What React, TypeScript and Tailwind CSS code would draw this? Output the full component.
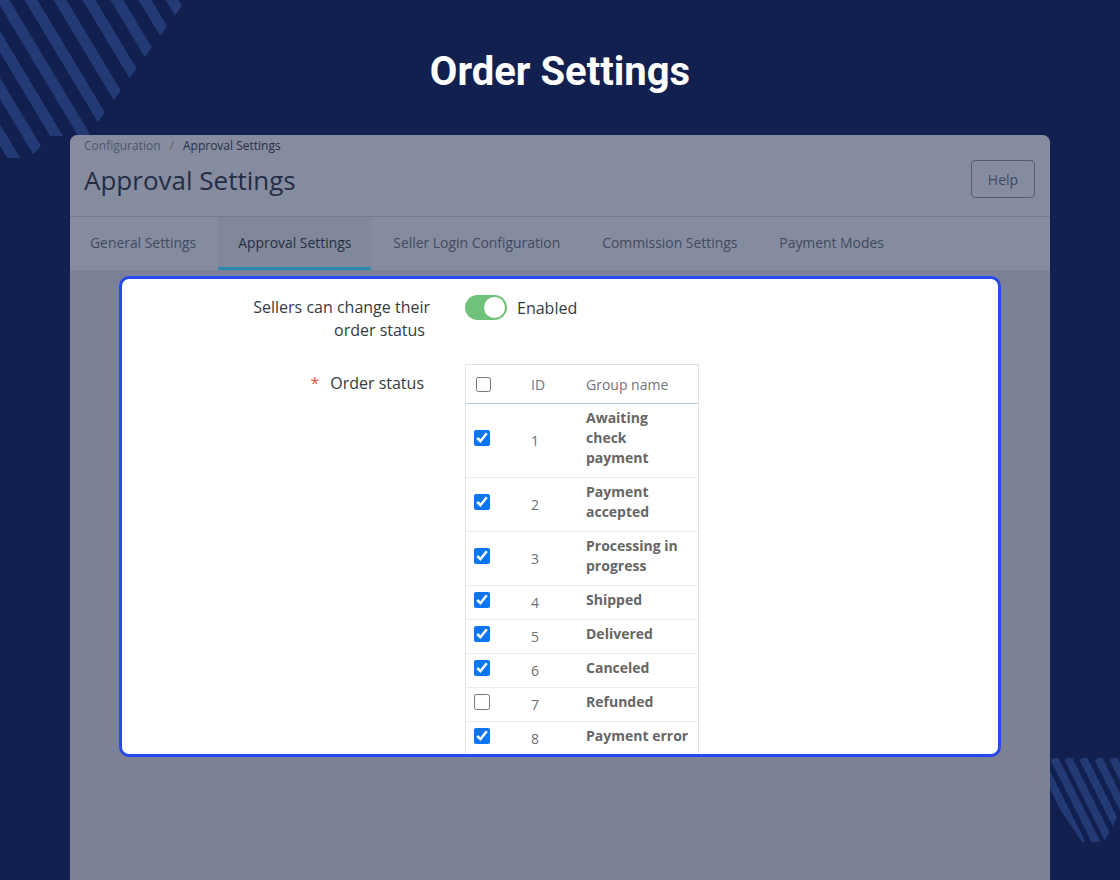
import { useState } from 'react';

const rows = [
  { id: 1, name: 'Awaiting check payment', on: true },
  { id: 2, name: 'Payment accepted', on: true },
  { id: 3, name: 'Processing in progress', on: true },
  { id: 4, name: 'Shipped', on: true },
  { id: 5, name: 'Delivered', on: true },
  { id: 6, name: 'Canceled', on: true },
  { id: 7, name: 'Refunded', on: false },
  { id: 8, name: 'Payment error', on: true },
];

const tabs = ['General Settings', 'Approval Settings', 'Seller Login Configuration', 'Commission Settings', 'Payment Modes'];

function StripesTopLeft() {
  const centers = [-109, -81, -53, -25, 3, 31, 60, 89, 117, 145, 172];
  return (
    <svg width="200" height="170" viewBox="0 0 200 170" className="absolute left-0 top-0">
      <defs>
        <clipPath id="tl">
          <polygon points="0,0 186,0 88,136 50,136 30,158 0,158" />
        </clipPath>
      </defs>
      <g clipPath="url(#tl)">
        {centers.map((c) => (
          <line key={c} x1={c - 6} y1={-10} x2={c + 0.6 * 200} y2={200} stroke="#243a74" strokeWidth={11} />
        ))}
      </g>
    </svg>
  );
}

function StripesBottomRight() {
  const centers = [1024, 1039, 1054, 1068, 1083, 1098, 1113];
  return (
    <svg width="1120" height="880" viewBox="0 0 1120 880" className="absolute left-0 top-0 pointer-events-none">
      <defs>
        <clipPath id="br">
          <polygon points="1040,758 1120,758 1120,812 1104,842 1082,842 1040,780" />
        </clipPath>
      </defs>
      <g clipPath="url(#br)">
        {centers.map((c) => (
          <line key={c} x1={c} y1={758} x2={c + 0.5 * 100} y2={858} stroke="#243a74" strokeWidth={8} />
        ))}
      </g>
    </svg>
  );
}

export default function App() {
  const [enabled, setEnabled] = useState(true);
  const [checked, setChecked] = useState(rows.map((r) => r.on));

  return (
    <div className="relative w-[1120px] h-[880px] overflow-hidden bg-[#12204f]" style={{ fontFamily: '"Open Sans", sans-serif' }}>
      <StripesTopLeft />
      <StripesBottomRight />

      <div className="relative h-[135px] flex items-center justify-center pt-[8px]">
        <h1 className="text-white text-[40px] font-bold" style={{ fontFamily: 'Roboto, sans-serif' }}>Order Settings</h1>
      </div>

      <div className="relative mx-[70px] h-[745px] rounded-t-lg bg-[#7b8196] overflow-hidden">
        <div className="bg-[#868c9f]">
          <div className="h-[81px] flex justify-between pl-[14px] pr-[15px]">
            <div className="pt-[3px]">
              <div className="flex items-center text-[12px] leading-[16px]">
                <span className="text-[#4d566c]">Configuration</span>
                <span className="mx-[9px] text-[#4f6a55]">/</span>
                <span className="text-[#283046]">Approval Settings</span>
              </div>
              <div className="mt-[9px] text-[26px] leading-[34px] text-[#252d45]">Approval Settings</div>
            </div>
            <button className="mt-[25px] h-[38px] w-[64px] rounded border border-[#515b72] text-[14px] text-[#3e4860]">Help</button>
          </div>
          <div className="border-t border-[#737a8e] h-[54px] flex gap-[2px]">
            {tabs.map((t, i) => (
              <div
                key={t}
                className={
                  i === 1
                    ? 'px-5 flex items-center text-[13.9px] text-[#262e44] bg-[#81889b] border-b-[3px] border-[#2a89a8] pt-[2px]'
                    : 'px-5 flex items-center text-[13.9px] text-[#404a62]'
                }
              >
                {t}
              </div>
            ))}
          </div>
        </div>

        <div className="mt-[6px] mx-[49px] h-[481px] rounded-[10px] border-[3px] border-[#2748ef] bg-white overflow-hidden">
          <div className="flex pt-[17px]">
            <div className="w-[308px] text-right text-[16px] leading-[23px] text-[#363a41]">
              <div>Sellers can change their</div>
              <div className="pr-[5px]">order status</div>
            </div>
            <div className="ml-[35px] flex items-center gap-[10px] h-[23px]">
              <button
                onClick={() => setEnabled(!enabled)}
                className={
                  enabled
                    ? 'w-[42px] h-[25px] rounded-full bg-[#70c27b] flex items-center justify-end px-[2px]'
                    : 'w-[42px] h-[25px] rounded-full bg-[#bbcdd2] flex items-center justify-start px-[2px]'
                }
              >
                <span className="w-[21px] h-[21px] rounded-full bg-white" />
              </button>
              <span className="text-[16px] text-[#363a41]">{enabled ? 'Enabled' : 'Disabled'}</span>
            </div>
          </div>

          <div className="flex items-start mt-[22px]">
            <div className="w-[302px] pt-[8px] flex justify-end text-[16px] leading-[23px] text-[#363a41]">
              <span className="text-[#e3553b] mr-[11px]">*</span>
              <span>Order status</span>
            </div>
            <div className="ml-[41px] w-[234px] h-[400px] border-x border-t border-[#dfe2e6] text-[14px]">
              <div className="h-[39px] flex items-center border-b border-[#a6d2e6] text-[#6c757d]">
                <div className="w-[52px] pl-[10px] flex items-center">
                  <input type="checkbox" className="w-[15px] h-[15px] m-0" readOnly checked={false} />
                </div>
                <div className="w-[58px] pl-[13px]">ID</div>
                <div className="w-[122px] pl-[10px]">Group name</div>
              </div>
              {rows.map((r, i) => (
                <div key={r.id} className="flex border-b border-[#ebebeb]">
                  <div className="w-[52px] pl-2 flex items-center">
                    <input
                      type="checkbox"
                      className="w-4 h-4 m-0 mb-[6px] accent-[#0b75f5]"
                      checked={checked[i]}
                      onChange={() => setChecked(checked.map((c, j) => (j === i ? !c : c)))}
                    />
                  </div>
                  <div className="w-[58px] pl-[13px] flex items-center text-[#6f6f6f]">{r.id}</div>
                  <div className="w-[122px] pt-[4px] pb-[9px] pl-[10px] pr-[7px] font-bold leading-5 text-[#666666]">{r.name}</div>
                </div>
              ))}
            </div>
          </div>
        </div>
      </div>
    </div>
  );
}
